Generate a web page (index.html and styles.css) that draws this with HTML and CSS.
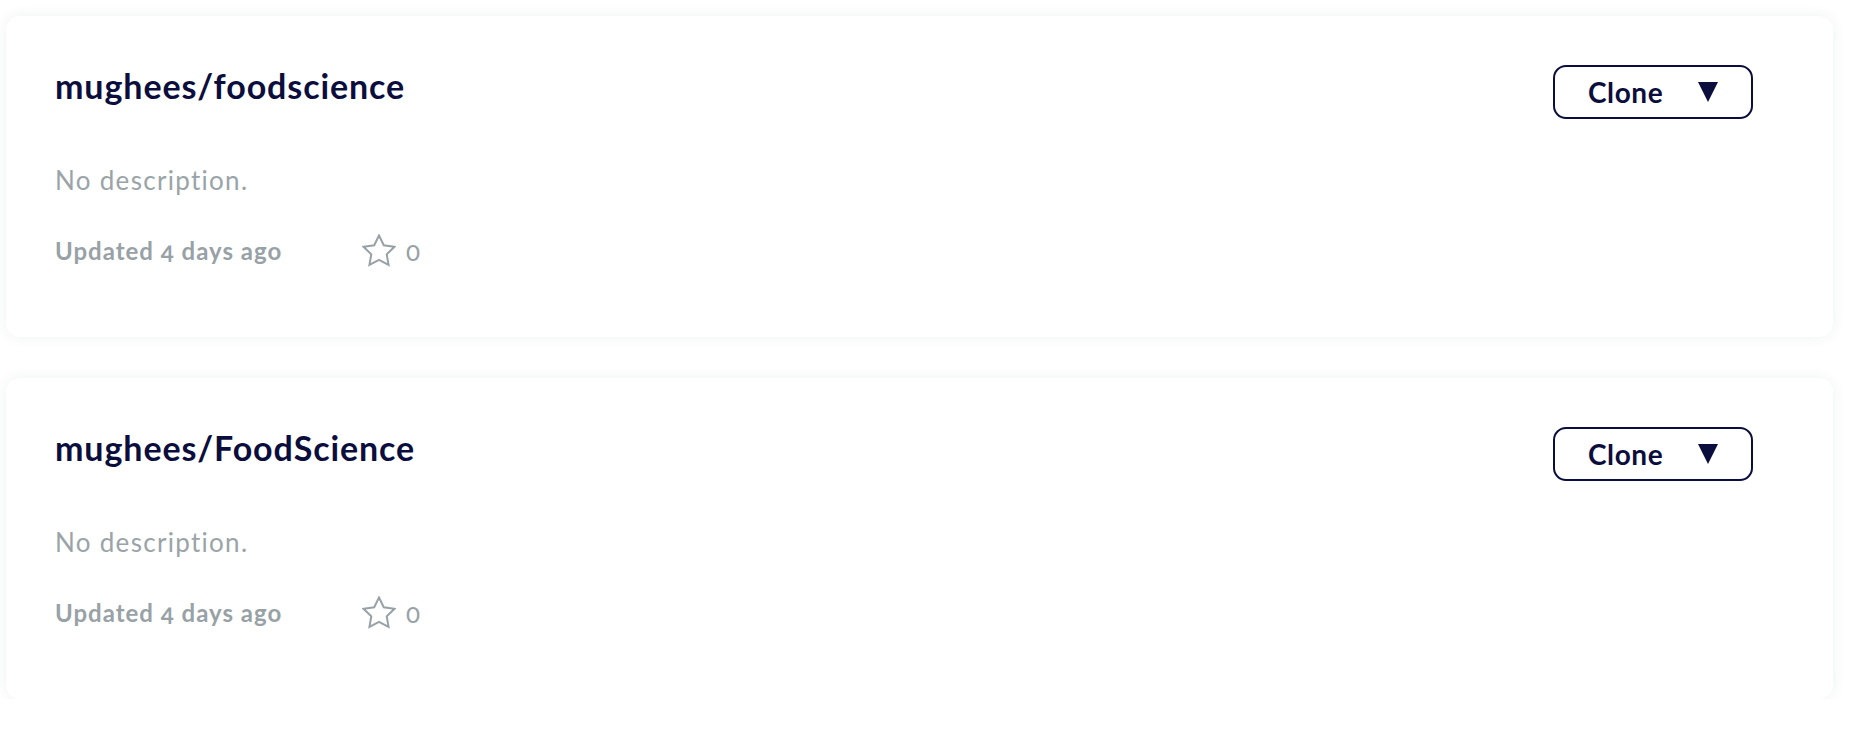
FILE: index.html
```html
<!DOCTYPE html>
<html lang="en">
<head>
<meta charset="utf-8">
<title>Repositories</title>
<link rel="stylesheet" href="styles.css">
</head>
<body>
<main class="repo-list">
  <article class="repo-card">
    <div class="repo-head">
      <h2 class="repo-name">mughees/foodscience</h2>
      <button class="clone-btn" type="button"><span class="clone-label">Clone</span><svg class="caret" viewBox="0 0 20 20" width="20" height="20" aria-hidden="true"><polygon points="0,0 20,0 10,20" fill="currentColor"/></svg></button>
    </div>
    <p class="repo-desc">No description.</p>
    <div class="repo-meta">
      <span class="updated">Updated 4 days ago</span>
      <svg class="star" viewBox="1 1 22 22" width="34" height="34" aria-hidden="true"><polygon points="12,2 15.09,8.26 22,9.27 17,14.14 18.18,21.02 12,17.77 5.82,21.02 7,14.14 2,9.27 8.91,8.26" fill="none" stroke="currentColor" stroke-width="1.3" stroke-linejoin="miter"/></svg>
      <span class="star-count">0</span>
    </div>
  </article>
  <article class="repo-card">
    <div class="repo-head">
      <h2 class="repo-name">mughees/FoodScience</h2>
      <button class="clone-btn" type="button"><span class="clone-label">Clone</span><svg class="caret" viewBox="0 0 20 20" width="20" height="20" aria-hidden="true"><polygon points="0,0 20,0 10,20" fill="currentColor"/></svg></button>
    </div>
    <p class="repo-desc">No description.</p>
    <div class="repo-meta">
      <span class="updated">Updated 4 days ago</span>
      <svg class="star" viewBox="1 1 22 22" width="34" height="34" aria-hidden="true"><polygon points="12,2 15.09,8.26 22,9.27 17,14.14 18.18,21.02 12,17.77 5.82,21.02 7,14.14 2,9.27 8.91,8.26" fill="none" stroke="currentColor" stroke-width="1.3" stroke-linejoin="miter"/></svg>
      <span class="star-count">0</span>
    </div>
  </article>
</main>
</body>
</html>
```

FILE: styles.css
```css
* {
  box-sizing: border-box;
}

html, body {
  margin: 0;
  padding: 0;
  background: #ffffff;
}

body {
  font-family: "Lato", "Open Sans", "Liberation Sans", sans-serif;
  font-variant-numeric: oldstyle-nums;
  color: #0b0e3d;
}

.repo-list {
  display: flex;
  flex-direction: column;
  gap: 41px;
  padding: 16px 27px 0 6px;
}

.repo-card {
  background: #ffffff;
  border-radius: 14px;
  box-shadow: 0 0 14px rgba(30, 50, 50, 0.07);
  padding: 49px 80px 69px 49px;
}

.repo-head {
  display: flex;
  justify-content: space-between;
  align-items: flex-start;
  height: 54px;
}

.repo-name {
  margin: 1px 0 0;
  font-size: 34px;
  line-height: 40px;
  font-weight: 700;
  letter-spacing: 0.9px;
  color: #0b0e3d;
}

.clone-btn {
  display: flex;
  align-items: center;
  height: 54px;
  width: 200px;
  padding: 0 33px;
  border: 2px solid #0b0e3d;
  border-radius: 13px;
  background: #ffffff;
  color: #0b0e3d;
  font-family: inherit;
  cursor: pointer;
}

.clone-label {
  font-size: 28px;
  line-height: 30px;
  font-weight: 700;
  letter-spacing: 0.6px;
}

.caret {
  display: block;
  margin-left: auto;
}

.repo-desc {
  margin: 46px 0 0;
  font-size: 26px;
  line-height: 30px;
  font-weight: 400;
  letter-spacing: 1.3px;
  color: #9aa4a8;
}

.repo-meta {
  display: flex;
  align-items: center;
  margin-top: 39px;
  height: 34px;
  color: #98a2a6;
}

.updated {
  width: 307px;
  font-size: 24px;
  line-height: 30px;
  font-weight: 700;
  letter-spacing: 1px;
}

.star {
  display: block;
  color: #98a2a6;
}

.star-count {
  margin-left: 10px;
  font-size: 26px;
  line-height: 30px;
  font-weight: 400;
}
```
